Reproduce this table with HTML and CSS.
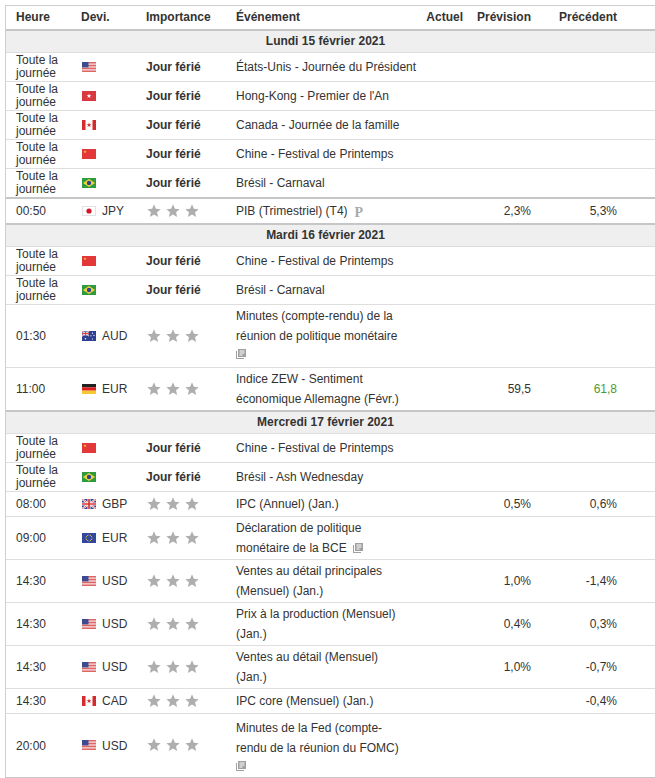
FILE: index.html
```html
<!DOCTYPE html>
<html lang="fr">
<head>
<meta charset="utf-8">
<title>Calendrier économique</title>
<link rel="stylesheet" href="styles.css">
</head>
<body>
<svg class="defs" xmlns="http://www.w3.org/2000/svg">
  <symbol id="f-us" viewBox="0 0 14 10">
    <rect width="14" height="10" fill="#fff"/>
    <g fill="#d23a3a">
      <rect y="0" width="14" height="0.77"/><rect y="1.54" width="14" height="0.77"/><rect y="3.08" width="14" height="0.77"/><rect y="4.62" width="14" height="0.77"/><rect y="6.15" width="14" height="0.77"/><rect y="7.69" width="14" height="0.77"/><rect y="9.23" width="14" height="0.77"/>
    </g>
    <rect width="6.5" height="5.4" fill="#3d4b93"/>
  </symbol>
  <symbol id="f-hk" viewBox="0 0 14 10">
    <rect width="14" height="10" fill="#d8383e"/>
    <polygon fill="#fff" points="7,2.4 7.59,4.19 9.47,4.2 7.95,5.31 8.53,7.1 7,6 5.47,7.1 6.05,5.31 4.53,4.2 6.41,4.19"/>
  </symbol>
  <symbol id="f-ca" viewBox="0 0 14 10">
    <rect width="14" height="10" fill="#fff"/>
    <rect width="3.5" height="10" fill="#d52b2b"/>
    <rect x="10.5" width="3.5" height="10" fill="#d52b2b"/>
    <polygon fill="#d52b2b" points="7,2.4 7.59,4.19 9.47,4.2 7.95,5.31 8.53,7.1 7,6 5.47,7.1 6.05,5.31 4.53,4.2 6.41,4.19"/>
  </symbol>
  <symbol id="f-cn" viewBox="0 0 14 10">
    <rect width="14" height="10" fill="#e2383a"/>
    <polygon fill="#f7d13a" points="3,1.2 3.38,2.27 4.52,2.31 3.62,3 3.94,4.09 3,3.45 2.06,4.09 2.38,3 1.48,2.31 2.62,2.27"/>
  </symbol>
  <symbol id="f-br" viewBox="0 0 14 10">
    <rect width="14" height="10" fill="#2f9b3f"/>
    <polygon fill="#f1d43a" points="7,1 13,5 7,9 1,5"/>
    <circle cx="7" cy="5" r="2.2" fill="#2c4596"/>
  </symbol>
  <symbol id="f-jp" viewBox="0 0 14 10">
    <rect x="0.5" y="0.5" width="13" height="9" fill="#fff" stroke="#e2e2e2"/>
    <circle cx="7" cy="5" r="2.6" fill="#d3142b"/>
  </symbol>
  <symbol id="f-au" viewBox="0 0 14 10">
    <rect width="14" height="10" fill="#2d3f8f"/>
    <g>
      <path d="M0 0L7 5M7 0L0 5" stroke="#fff" stroke-width="1.2"/>
      <path d="M0 0L7 5M7 0L0 5" stroke="#d33" stroke-width="0.5"/>
      <path d="M3.5 0V5M0 2.5H7" stroke="#fff" stroke-width="1.6"/>
      <path d="M3.5 0V5M0 2.5H7" stroke="#d33" stroke-width="0.9"/>
    </g>
    <circle cx="3.5" cy="7.7" r="0.8" fill="#fff"/>
    <circle cx="10.5" cy="2.2" r="0.6" fill="#fff"/>
    <circle cx="9" cy="4.8" r="0.6" fill="#fff"/>
    <circle cx="12" cy="4.4" r="0.6" fill="#fff"/>
    <circle cx="10.5" cy="8" r="0.6" fill="#fff"/>
  </symbol>
  <symbol id="f-de" viewBox="0 0 14 10">
    <rect width="14" height="3.34" fill="#222"/>
    <rect y="3.33" width="14" height="3.34" fill="#dd1f1f"/>
    <rect y="6.66" width="14" height="3.34" fill="#f5c831"/>
  </symbol>
  <symbol id="f-gb" viewBox="0 0 14 10">
    <rect width="14" height="10" fill="#2b438f"/>
    <path d="M0 0L14 10M14 0L0 10" stroke="#fff" stroke-width="2"/>
    <path d="M0 0L14 10M14 0L0 10" stroke="#d33" stroke-width="0.7"/>
    <path d="M7 0V10M0 5H14" stroke="#fff" stroke-width="3"/>
    <path d="M7 0V10M0 5H14" stroke="#d33" stroke-width="1.7"/>
  </symbol>
  <symbol id="f-eu" viewBox="0 0 14 10">
    <rect width="14" height="10" fill="#33479c"/>
    <g fill="#f3d23a">
      <circle cx="7" cy="2" r="0.5"/><circle cx="8.5" cy="2.4" r="0.5"/><circle cx="9.6" cy="3.5" r="0.5"/><circle cx="10" cy="5" r="0.5"/><circle cx="9.6" cy="6.5" r="0.5"/><circle cx="8.5" cy="7.6" r="0.5"/><circle cx="7" cy="8" r="0.5"/><circle cx="5.5" cy="7.6" r="0.5"/><circle cx="4.4" cy="6.5" r="0.5"/><circle cx="4" cy="5" r="0.5"/><circle cx="4.4" cy="3.5" r="0.5"/><circle cx="5.5" cy="2.4" r="0.5"/>
    </g>
  </symbol>
  <symbol id="star" viewBox="0 0 24 24">
    <path d="M12 17.27L18.18 21l-1.64-7.03L22 9.24l-7.19-.61L12 2 9.19 8.63 2 9.24l5.46 4.73L5.82 21z"/>
  </symbol>
  <symbol id="news" viewBox="0 0 10 10">
    <path d="M0 2h1v7h7v1H0z" fill="#a0a0a0"/>
    <rect x="2" y="0" width="8" height="8" fill="#a0a0a0"/>
    <path d="M3.5 2h5M3.5 4h5M3.5 6h3" stroke="#fff" stroke-width="1"/>
  </symbol>
</svg>

<table class="cal">
  <thead>
    <tr>
      <th class="c-time">Heure</th>
      <th class="c-cur">Devi.</th>
      <th class="c-imp">Importance</th>
      <th class="c-ev">Événement</th>
      <th class="c-act num">Actuel</th>
      <th class="c-fc num">Prévision</th>
      <th class="c-prev num">Précédent</th>
      <th class="c-x"></th>
    </tr>
  </thead>
  <tbody>
    <tr class="date"><td colspan="8">Lundi 15 février 2021</td></tr>
    <tr class="hol">
      <td class="time">Toute la journée</td>
      <td class="cur"><svg class="flag"><use href="#f-us"/></svg></td>
      <td class="imp">Jour férié</td>
      <td class="ev" colspan="2">États-Unis - Journée du Président</td>
      <td></td><td></td><td></td>
    </tr>
    <tr class="hol">
      <td class="time">Toute la journée</td>
      <td class="cur"><svg class="flag"><use href="#f-hk"/></svg></td>
      <td class="imp">Jour férié</td>
      <td class="ev" colspan="2">Hong-Kong - Premier de l'An</td>
      <td></td><td></td><td></td>
    </tr>
    <tr class="hol">
      <td class="time">Toute la journée</td>
      <td class="cur"><svg class="flag"><use href="#f-ca"/></svg></td>
      <td class="imp">Jour férié</td>
      <td class="ev" colspan="2">Canada - Journée de la famille</td>
      <td></td><td></td><td></td>
    </tr>
    <tr class="hol">
      <td class="time">Toute la journée</td>
      <td class="cur"><svg class="flag"><use href="#f-cn"/></svg></td>
      <td class="imp">Jour férié</td>
      <td class="ev" colspan="2">Chine - Festival de Printemps</td>
      <td></td><td></td><td></td>
    </tr>
    <tr class="hol sep">
      <td class="time">Toute la journée</td>
      <td class="cur"><svg class="flag"><use href="#f-br"/></svg></td>
      <td class="imp">Jour férié</td>
      <td class="ev" colspan="2">Brésil - Carnaval</td>
      <td></td><td></td><td></td>
    </tr>
    <tr class="sep">
      <td class="time">00:50</td>
      <td class="cur"><svg class="flag"><use href="#f-jp"/></svg><span class="ccy">JPY</span></td>
      <td class="imp"><span class="stars"><svg><use href="#star"/></svg><svg><use href="#star"/></svg><svg><use href="#star"/></svg></span></td>
      <td class="ev">PIB (Trimestriel) (T4)<span class="prelim">P</span></td>
      <td class="num"></td><td class="num">2,3%</td><td class="num">5,3%</td><td></td>
    </tr>

    <tr class="date"><td colspan="8">Mardi 16 février 2021</td></tr>
    <tr class="hol">
      <td class="time">Toute la journée</td>
      <td class="cur"><svg class="flag"><use href="#f-cn"/></svg></td>
      <td class="imp">Jour férié</td>
      <td class="ev" colspan="2">Chine - Festival de Printemps</td>
      <td></td><td></td><td></td>
    </tr>
    <tr class="hol">
      <td class="time">Toute la journée</td>
      <td class="cur"><svg class="flag"><use href="#f-br"/></svg></td>
      <td class="imp">Jour férié</td>
      <td class="ev" colspan="2">Brésil - Carnaval</td>
      <td></td><td></td><td></td>
    </tr>
    <tr>
      <td class="time">01:30</td>
      <td class="cur"><svg class="flag"><use href="#f-au"/></svg><span class="ccy">AUD</span></td>
      <td class="imp"><span class="stars"><svg><use href="#star"/></svg><svg><use href="#star"/></svg><svg><use href="#star"/></svg></span></td>
      <td class="ev">Minutes (compte-rendu) de la réunion de politique monétaire<div class="news-line"><svg class="news"><use href="#news"/></svg></div></td>
      <td class="num"></td><td class="num"></td><td class="num"></td><td></td>
    </tr>
    <tr class="sep">
      <td class="time">11:00</td>
      <td class="cur"><svg class="flag"><use href="#f-de"/></svg><span class="ccy">EUR</span></td>
      <td class="imp"><span class="stars"><svg><use href="#star"/></svg><svg><use href="#star"/></svg><svg><use href="#star"/></svg></span></td>
      <td class="ev">Indice ZEW - Sentiment économique Allemagne (Févr.)</td>
      <td class="num"></td><td class="num">59,5</td><td class="num up">61,8</td><td></td>
    </tr>

    <tr class="date"><td colspan="8">Mercredi 17 février 2021</td></tr>
    <tr class="hol">
      <td class="time">Toute la journée</td>
      <td class="cur"><svg class="flag"><use href="#f-cn"/></svg></td>
      <td class="imp">Jour férié</td>
      <td class="ev" colspan="2">Chine - Festival de Printemps</td>
      <td></td><td></td><td></td>
    </tr>
    <tr class="hol">
      <td class="time">Toute la journée</td>
      <td class="cur"><svg class="flag"><use href="#f-br"/></svg></td>
      <td class="imp">Jour férié</td>
      <td class="ev" colspan="2">Brésil - Ash Wednesday</td>
      <td></td><td></td><td></td>
    </tr>
    <tr>
      <td class="time">08:00</td>
      <td class="cur"><svg class="flag"><use href="#f-gb"/></svg><span class="ccy">GBP</span></td>
      <td class="imp"><span class="stars"><svg><use href="#star"/></svg><svg><use href="#star"/></svg><svg><use href="#star"/></svg></span></td>
      <td class="ev">IPC (Annuel) (Jan.)</td>
      <td class="num"></td><td class="num">0,5%</td><td class="num">0,6%</td><td></td>
    </tr>
    <tr>
      <td class="time">09:00</td>
      <td class="cur"><svg class="flag"><use href="#f-eu"/></svg><span class="ccy">EUR</span></td>
      <td class="imp"><span class="stars"><svg><use href="#star"/></svg><svg><use href="#star"/></svg><svg><use href="#star"/></svg></span></td>
      <td class="ev">Déclaration de politique monétaire de la BCE<svg class="news inline"><use href="#news"/></svg></td>
      <td class="num"></td><td class="num"></td><td class="num"></td><td></td>
    </tr>
    <tr>
      <td class="time">14:30</td>
      <td class="cur"><svg class="flag"><use href="#f-us"/></svg><span class="ccy">USD</span></td>
      <td class="imp"><span class="stars"><svg><use href="#star"/></svg><svg><use href="#star"/></svg><svg><use href="#star"/></svg></span></td>
      <td class="ev">Ventes au détail principales (Mensuel) (Jan.)</td>
      <td class="num"></td><td class="num">1,0%</td><td class="num">-1,4%</td><td></td>
    </tr>
    <tr>
      <td class="time">14:30</td>
      <td class="cur"><svg class="flag"><use href="#f-us"/></svg><span class="ccy">USD</span></td>
      <td class="imp"><span class="stars"><svg><use href="#star"/></svg><svg><use href="#star"/></svg><svg><use href="#star"/></svg></span></td>
      <td class="ev">Prix à la production (Mensuel) (Jan.)</td>
      <td class="num"></td><td class="num">0,4%</td><td class="num">0,3%</td><td></td>
    </tr>
    <tr>
      <td class="time">14:30</td>
      <td class="cur"><svg class="flag"><use href="#f-us"/></svg><span class="ccy">USD</span></td>
      <td class="imp"><span class="stars"><svg><use href="#star"/></svg><svg><use href="#star"/></svg><svg><use href="#star"/></svg></span></td>
      <td class="ev">Ventes au détail (Mensuel) (Jan.)</td>
      <td class="num"></td><td class="num">1,0%</td><td class="num">-0,7%</td><td></td>
    </tr>
    <tr>
      <td class="time">14:30</td>
      <td class="cur"><svg class="flag"><use href="#f-ca"/></svg><span class="ccy">CAD</span></td>
      <td class="imp"><span class="stars"><svg><use href="#star"/></svg><svg><use href="#star"/></svg><svg><use href="#star"/></svg></span></td>
      <td class="ev">IPC core (Mensuel) (Jan.)</td>
      <td class="num"></td><td class="num"></td><td class="num">-0,4%</td><td></td>
    </tr>
    <tr class="last">
      <td class="time">20:00</td>
      <td class="cur"><svg class="flag"><use href="#f-us"/></svg><span class="ccy">USD</span></td>
      <td class="imp"><span class="stars"><svg><use href="#star"/></svg><svg><use href="#star"/></svg><svg><use href="#star"/></svg></span></td>
      <td class="ev">Minutes de la Fed (compte-rendu de la réunion du FOMC)<div class="news-line"><svg class="news"><use href="#news"/></svg></div></td>
      <td class="num"></td><td class="num"></td><td class="num"></td><td></td>
    </tr>
  </tbody>
</table>
</body>
</html>
```

FILE: styles.css
```css
html, body {
  margin: 0;
  overflow: hidden;
  background: #fff;
}

body {
  padding: 5px 0 0 5px;
  font-family: "Liberation Sans", Arial, sans-serif;
  font-size: 12px;
  color: #333;
}

.defs {
  position: absolute;
  width: 0;
  height: 0;
  overflow: hidden;
}

.cal {
  border-collapse: separate;
  border-spacing: 0;
  table-layout: fixed;
  width: 655px;
  border-top: 1px solid #cfcfcf;
  border-left: 1px solid #cfcfcf;
  border-bottom: 2px solid #c6c6c6;
}

.cal th,
.cal td {
  box-sizing: border-box;
  padding: 2px 6px;
  vertical-align: middle;
  line-height: 20px;
  text-align: left;
  border-bottom: 1px solid #dedede;
}

.cal th {
  font-weight: bold;
  line-height: 19px;
  border-bottom: 2px solid #c6c6c6;
}

.c-time { width: 69px; }
.c-cur { width: 65px; }
.c-imp { width: 90px; }
.c-ev { width: 177px; }
.c-act { width: 62px; }
.c-fc { width: 68px; }
.c-prev { width: 86px; }
.c-x { width: 37px; }

.cal th.c-time,
.cal td.time {
  padding-left: 10px;
}

.cal th.c-ev {
  padding-right: 3px;
}

.cal td.ev {
  padding-top: 1px;
  padding-bottom: 1px;
  padding-right: 3px;
}

.cal tr.last td.ev {
  padding-top: 4px;
  padding-bottom: 0;
}

.cal .num {
  text-align: right;
}

.cal tr.date td {
  background: #efefef;
  font-weight: bold;
  text-align: center;
  line-height: 17px;
  padding: 2px 15px 2px 0;
}

.cal tr.hol td.time {
  line-height: 13px;
  padding-top: 1px;
  padding-bottom: 1px;
}

.cal tr.hol td.imp {
  font-weight: bold;
}

.cal tr.sep td {
  border-bottom: 2px solid #c6c6c6;
}

.cal tr.last td {
  border-bottom: none;
}

.flag {
  width: 14px;
  height: 10px;
  vertical-align: middle;
  margin-left: 1px;
  position: relative;
  top: -1px;
}

.ccy {
  margin-left: 6px;
}

.stars {
  display: inline-flex;
  gap: 3px;
  vertical-align: middle;
  position: relative;
  top: -1px;
}

.stars svg {
  width: 16px;
  height: 16px;
  fill: #aeaeae;
}

.prelim {
  font-family: "Liberation Serif", "Times New Roman", serif;
  font-weight: bold;
  font-size: 14px;
  color: #a9a9a9;
  margin-left: 7px;
  position: relative;
  top: 2px;
}

.news {
  width: 10px;
  height: 10px;
  vertical-align: middle;
}

.news.inline {
  margin-left: 6px;
  position: relative;
  top: -1px;
}

.news-line {
  height: 17px;
}

.last .news-line {
  height: 16px;
}

.news-line .news {
  display: block;
  margin-top: 3px;
}

.up {
  color: #4a9b33;
}
```
